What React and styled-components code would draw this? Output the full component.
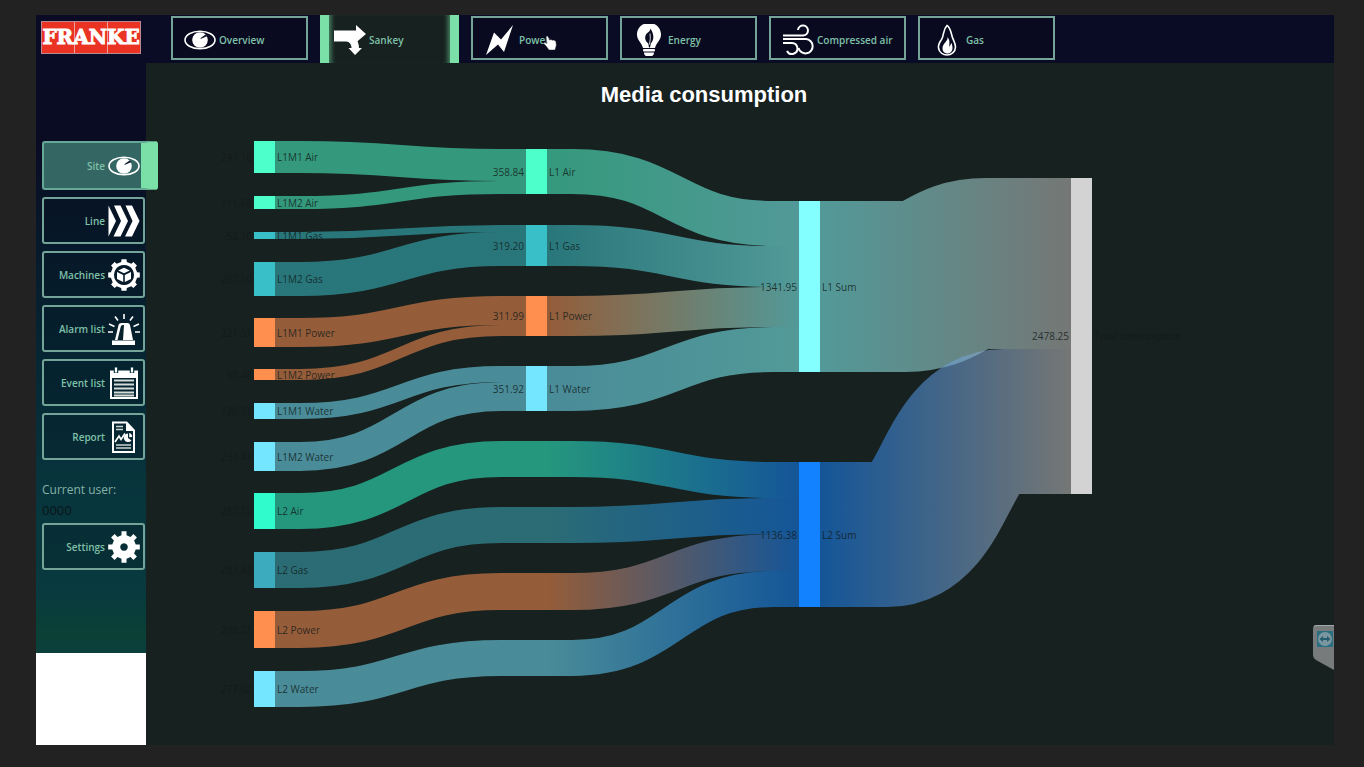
import React from "react";
import styled, { createGlobalStyle, css } from "styled-components";

const color = {
  frame: "#232222",
  canvas: "#17211f",
  navy: "#0a0b24",
  line: "#74a497",
  label: "#7fc0a8",
  accent: "#7be0a8",
};

const GlobalStyle = createGlobalStyle`
  * { box-sizing: border-box; }
  body {
    margin: 0;
    background: ${color.frame};
    font-family: "Open Sans", "Noto Sans", sans-serif;
  }
`;

const Page = styled.div`
  min-height: 100vh;
  padding: 15px 30px 22px 36px;
  display: flex;
`;

const Shell = styled.div`
  position: relative;
  flex: 1;
  min-width: 0;
  display: flex;
  flex-direction: column;
  background: ${color.canvas};
`;

const Header = styled.header`
  display: flex;
  align-items: center;
  height: 48px;
  padding-left: 5px;
  background: ${color.navy};
`;

const Logo = styled.a`
  width: 100px;
  height: 33px;
  margin-right: 30px;
  margin-bottom: 4px;
  border: 1px solid #b98a93;
  display: flex;
  align-items: center;
  justify-content: center;
  color: #fff;
  text-decoration: none;
  font: bold 20px/32px "DejaVu Serif", serif;
  -webkit-text-stroke: 1px #fff;
  background: linear-gradient(
    90deg,
    #ea3323 0 32px, #e9a3a0 32px 33px,
    #ea3323 33px 65px, #e9a3a0 65px 66px,
    #ea3323 66px
  );
`;

const Tabs = styled.nav`
  display: flex;
  align-items: center;
  gap: 12px;
  height: 48px;
`;

const Tab = styled.button`
  position: relative;
  display: flex;
  align-items: center;
  gap: 3px;
  width: 137px;
  height: 44px;
  margin: 0 0 3px;
  padding: 4px 0 0 11px;
  border: 2px solid ${color.line};
  background: #090a20;
  color: ${color.label};
  font: 600 10px/16px "Open Sans", "Noto Sans", sans-serif;
  text-align: left;
  white-space: nowrap;

  ${(p) =>
    p.$active &&
    css`
      width: 139px;
      height: 48px;
      margin: 0;
      padding: 2px 0 0 5px;
      border: solid ${color.accent};
      border-width: 0 9px;
      background: ${color.canvas};
      box-shadow: inset 6px 0 5px -4px #4d8a6b, inset -6px 0 5px -4px #4d8a6b;
    `}
`;

const Pointer = styled.svg`
  position: absolute;
  left: 70px;
  top: 17px;
  width: 14px;
  height: 16px;
`;

const Body = styled.div`
  flex: 1;
  display: flex;
`;

const Sidebar = styled.aside`
  width: 110px;
  flex: none;
  display: flex;
  flex-direction: column;
  background: linear-gradient(
    180deg,
    #0a0b24 0, #0a0c24 80px, #07192b 180px, #062b37 340px,
    #08353d 430px, #083a3e 530px, #0a4036 570px, #0a3f3c 590px
  );
`;

const SideNav = styled.nav`
  display: flex;
  flex-direction: column;
  gap: 7px;
  padding: 78px 1px 0 6px;
`;

const SideButton = styled.button`
  position: relative;
  display: flex;
  align-items: center;
  justify-content: flex-end;
  gap: 3px;
  width: 103px;
  height: 47px;
  padding: 0 3px 0 0;
  border: 2px solid ${color.line};
  border-radius: 3px;
  background: rgba(3, 20, 32, 0.25);
  color: ${color.label};
  font: 600 10px/16px "Open Sans", "Noto Sans", sans-serif;
  white-space: nowrap;

  ${(p) =>
    p.$active &&
    css`
      width: 116px;
      height: 49px;
      padding-right: 1px;
      border-color: #67a797;
      border-right: 17px solid ${color.accent};
      background: #346764;
    `}
`;

const UserPanel = styled.div`
  display: flex;
  flex-direction: column;
  gap: 7px;
  padding: 20px 1px 0 6px;
`;

const UserText = styled.div`
  font-size: ${(p) => (p.$dim ? "13px" : "12px")};
  line-height: 20px;
  color: ${(p) => (p.$dim ? "#0b1418" : "#84b3a5")};
  height: ${(p) => (p.$dim ? "16px" : "20px")};
`;

const Blank = styled.div`
  height: 92px;
  margin-top: auto;
  background: #fff;
`;

const Main = styled.main`
  flex: 1;
  min-width: 0;
`;

const Title = styled.h1`
  margin: 0;
  padding-right: 72px;
  color: #fff;
  font: bold 22px/64px "Liberation Sans", Arial, sans-serif;
  text-align: center;
`;

const Chart = styled.svg`
  display: block;
  width: 100%;
  height: auto;
  font-family: "Open Sans", "Noto Sans", sans-serif;
  font-size: 10px;
  text {
    fill: #101a1a;
    fill-opacity: 0.8;
    dominant-baseline: central;
  }
`;

const RemoteHandle = styled.button`
  position: absolute;
  right: 0;
  bottom: 75px;
  width: 21px;
  height: 45px;
  padding: 0;
  border: 0;
  background: none;
  svg { display: block; }
`;

const IconBox = styled.svg`
  width: 32px;
  height: 32px;
  flex: none;
  fill: #fff;
`;

const gear = (teeth, outer, root, c = 16) => {
  const points = [];
  const step = (Math.PI * 2) / teeth;
  for (let i = 0; i < teeth; i += 1) {
    const a = i * step - Math.PI / 2;
    [[-0.27, root], [-0.2, outer], [0.2, outer], [0.27, root]].forEach(([k, r]) => {
      points.push(`${(c + r * Math.cos(a + k * step)).toFixed(2)} ${(c + r * Math.sin(a + k * step)).toFixed(2)}`);
    });
  }
  return `M${points.join("L")}Z`;
};

const glyphs = {
  eye: (
    <>
      <ellipse cx="16" cy="16" rx="15" ry="8.8" fill="none" stroke="#fff" strokeWidth="1.6" />
      <circle cx="16" cy="16" r="7.800" />
      <path d="M16 15.200L20.500 9.500 23.500 12z" fill="#0d1a2b" />
      <path d="M17.500 13.200l1.800-4 2.400 1.300z" />
    </>
  ),
  sankey: (
    <path d="M0 6.500h22V1l10 9-10 8.500v-4.500c1.500 2.500 3 6 3 10h3l-7 7-6.500-7h3c0-3.500-2-6.500-5.500-6.500H0z" />
  ),
  bolt: <path d="M29 1 L20 28 L14 20.500 L2 31 L10 8.500 L17 15.500 Z" />,
  bulb: (
    <>
      <path d="M16 -1C8.500-1 4 4.500 4 10.500c0 5.500 4.500 8 6 13.500h12c1.500-5.500 6-8 6-13.500C28 4.500 23.500-1 16-1z" />
      <path d="M17.500 4.500c3 5 4.500 10.500.3 15l-.8 4h-1l-.7-4c-4-3-4-8-1-10.500 2-1.500 3-2.500 3.200-4.500z" fill="#090a20" />
      <path d="M17 9.500l.3 5-.8 6" stroke="#fff" strokeWidth=".8" fill="none" />
      <rect x="10" y="25" width="12" height="2.500" rx="1" />
      <path d="M11 28.500h10c0 3-2 4-5 4s-5-1-5-4z" />
    </>
  ),
  wind: (
    <g fill="none" stroke="#fff" strokeWidth="2">
      <path d="M1 11.500h20a5 5 0 1 0-5-5.500" />
      <path d="M1 15h23a7.200 7.200 0 1 1-7.500 9" />
      <path d="M1 19h9a5.500 5.500 0 1 1-5 8" />
    </g>
  ),
  flame: (
    <>
      <path d="M16 1.500c-4.500 4.500-2.500 9-5.500 14C8 19 7 21 7.500 24c.8 4.500 4.500 7 8.500 7s8.500-3 8.500-8c0-4-2.500-7-3.500-11S19 3 16 1.500z" fill="none" stroke="#fff" strokeWidth="1.600" />
      <path d="M16.500 13c1 4-5 6-5 11.500 0 2.500 1.500 4.500 4 5 4 .4 6-2.500 6-5.500 0-2-.7-3.500-.7-5-1.500 1-1.500 3-2.300 4-.5-3.500 1-6-2-10z" />
    </>
  ),
  chevrons: (
    <>
      <path d="M.5 .5v31l7.500-15.500z" />
      <path d="M6 .5h6.500l7.500 15.500-7.500 15.500H5.500L13 16z" />
      <path d="M17.500 .5H24l7.500 15.500L24 31.500h-7L24.500 16z" />
    </>
  ),
  machine: (
    <>
      <path fillRule="evenodd" d={`${gear(8, 16, 13.4)}M16 6a10 10 0 1 0 .01 0z`} />
      <path d="M16 8.800l5.800 2.700-5.800 2.800-5.800-2.800zM9 13l6.200 3v7L9 20zM23 13l-6.200 3v7l6.200-3z" />
    </>
  ),
  alarm: (
    <>
      <path d="M4 27.500h23V32H4z" />
      <path d="M7 27l3.500-15q.5-2 3-2h6q2 0 2.500 2L25 27z" />
      <path d="M9.500 27l3.300-13.500q.3-1.500 2-1.500h1.200L15 27z" fill="#06202c" />
      <path d="M16 1v5M7 3.500l3 4M25 3.500l-3 4M1 11l5.500 2.500M31 11l-5.500 2.500M0 19h5M32 19h-5" stroke="#fff" strokeWidth="1.600" />
    </>
  ),
  calendar: (
    <>
      <path fillRule="evenodd" d="M2 3.500h28V32H2zM4 11v19h24V11z" />
      <path d="M8 0v6M24 0v6" stroke="#06303a" strokeWidth="4.500" />
      <path d="M8 .5v5M24 .5v5" stroke="#fff" strokeWidth="2.200" />
      <path d="M6 13.500h20M6 17.500h20M6 21.500h20M6 25.500h20M6 28.500h20" stroke="#d5dcd8" strokeWidth="1.900" />
    </>
  ),
  report: (
    <>
      <path fillRule="evenodd" d="M4 .5h15L27 9v23H4zM6 2.500V30h19V10h-7V2.500z" />
      <path d="M8 5.500h7M8 8.500h7M8 24h15M8 27h15" stroke="#c9d4d0" strokeWidth="1.300" />
      <path d="M7 21l4-6 2 3.500 4-6" fill="none" stroke="#fff" strokeWidth="1.700" />
      <path d="M20 12.500v4.500l3.500 2.500a4.300 4.300 0 1 1-3.500-7z" />
      <path d="M21.200 12a4 4 0 0 1 3 4l-3 .3z" />
    </>
  ),
  settings: <path fillRule="evenodd" d={`${gear(8, 16, 12)}M16 12.200a3.800 3.800 0 1 0 .01 0z`} />,
};

const Icon = ({ name }) => (
  <IconBox viewBox="0 0 32 32" aria-hidden="true">
    {glyphs[name]}
  </IconBox>
);

const tabs = [
  { label: "Overview", icon: "eye" },
  { label: "Sankey", icon: "sankey", active: true },
  { label: "Power", icon: "bolt", hovered: true },
  { label: "Energy", icon: "bulb" },
  { label: "Compressed air", icon: "wind" },
  { label: "Gas", icon: "flame" },
];

const sideItems = [
  { label: "Site", icon: "eye", active: true },
  { label: "Line", icon: "chevrons" },
  { label: "Machines", icon: "machine" },
  { label: "Alarm list", icon: "alarm" },
  { label: "Event list", icon: "calendar" },
  { label: "Report", icon: "report" },
];

const NODE_WIDTH = 21;
const COLUMNS = [254, 526, 799, 1071];

const media = {
  air: "#4dffcb",
  air2: "#30fbcd",
  gas: "#38bfc8",
  gas2: "#3cabbd",
  power: "#ff8f4f",
  water: "#74e6ff",
  l1: "#84ffff",
  l2: "#1282ff",
  total: "#d3d3d3",
  totalBand: "#c4c0be",
};

const nodes = [
  { id: "a1", col: 0, y: 141, h: 32, kind: "air", name: "L1M1 Air", value: "247.16" },
  { id: "a2", col: 0, y: 196, h: 13, kind: "air", name: "L1M2 Air", value: "111.68" },
  { id: "g1", col: 0, y: 232, h: 7, kind: "gas", name: "L1M1 Gas", value: "52.10" },
  { id: "g2", col: 0, y: 262, h: 34, kind: "gas", name: "L1M2 Gas", value: "267.10" },
  { id: "p1", col: 0, y: 318, h: 29, kind: "power", name: "L1M1 Power", value: "221.51" },
  { id: "p2", col: 0, y: 369, h: 11, kind: "power", name: "L1M2 Power", value: "90.48" },
  { id: "w1", col: 0, y: 403, h: 16, kind: "water", name: "L1M1 Water", value: "120.51" },
  { id: "w2", col: 0, y: 442, h: 29, kind: "water", name: "L1M2 Water", value: "231.41" },
  { id: "a3", col: 0, y: 493, h: 36, kind: "air2", name: "L2 Air", value: "287.12" },
  { id: "g3", col: 0, y: 552, h: 36, kind: "gas2", name: "L2 Gas", value: "281.43" },
  { id: "p3", col: 0, y: 611, h: 37, kind: "power", name: "L2 Power", value: "290.21" },
  { id: "w3", col: 0, y: 671, h: 36, kind: "water", name: "L2 Water", value: "277.62" },
  { id: "la", col: 1, y: 149, h: 45, kind: "air", name: "L1 Air", value: "358.84" },
  { id: "lg", col: 1, y: 225, h: 41, kind: "gas", name: "L1 Gas", value: "319.20" },
  { id: "lp", col: 1, y: 296, h: 40, kind: "power", name: "L1 Power", value: "311.99" },
  { id: "lw", col: 1, y: 366, h: 45, kind: "water", name: "L1 Water", value: "351.92" },
  { id: "s1", col: 2, y: 201, h: 171, kind: "l1", name: "L1 Sum", value: "1341.95" },
  { id: "s2", col: 2, y: 462, h: 145, kind: "l2", name: "L2 Sum", value: "1136.38" },
  { id: "t", col: 3, y: 178, h: 316, kind: "total", name: "Total consumption", value: "2478.25" },
];

// `top` holds the upper edge of a band at its two ends; `via` is the edge as it passes the second column
const links = [
  { from: 0, to: 1, top: [141, 149], w: 32, c: ["air", "air"] },
  { from: 0, to: 1, top: [196, 181], w: 13, c: ["air", "air"] },
  { from: 0, to: 1, top: [232, 225], w: 7, c: ["gas", "gas"] },
  { from: 0, to: 1, top: [262, 232], w: 34, c: ["gas", "gas"] },
  { from: 0, to: 1, top: [318, 296], w: 29, c: ["power", "power"] },
  { from: 0, to: 1, top: [369, 325], w: 11, c: ["power", "power"] },
  { from: 0, to: 1, top: [403, 366], w: 16, c: ["water", "water"] },
  { from: 0, to: 1, top: [442, 382], w: 29, c: ["water", "water"] },
  { from: 1, to: 2, top: [149, 201], w: 45, c: ["air", "l1"] },
  { from: 1, to: 2, top: [225, 246], w: 41, c: ["gas", "l1"] },
  { from: 1, to: 2, top: [296, 287], w: 40, c: ["power", "l1"] },
  { from: 1, to: 2, top: [366, 327], w: 45, c: ["water", "l1"] },
  { from: 0, to: 2, via: 441, top: [493, 462], w: 36, c: ["air2", "l2"] },
  { from: 0, to: 2, via: 507, top: [552, 498], w: 36, c: ["gas2", "l2"] },
  { from: 0, to: 2, via: 573, top: [611, 534], w: 37, c: ["power", "l2"] },
  { from: 0, to: 2, via: 640, top: [671, 571], w: 36, c: ["water", "l2"] },
  { from: 2, to: 3, top: [201, 178], w: 171, lead: 85, c: ["l1", "totalBand"] },
  { from: 2, to: 3, top: [462, 349], w: 145, lead: 67, c: ["l2", "totalBand"] },
];

// A band leaves and enters its nodes straight for `lead` units and bends in between
const bend = (x0, y0, x1, y1, lead) => {
  const mid = (x0 + x1) / 2;
  return `H${x0 + lead}C${mid} ${y0} ${mid} ${y1} ${x1 - lead} ${y1}H${x1}`;
};

const linkPath = ({ from, to, via, top, w, lead = 25 }) => {
  const x0 = COLUMNS[from] + NODE_WIDTH;
  const x1 = COLUMNS[to];
  const y0 = top[0] + w / 2;
  const y1 = top[1] + w / 2;
  if (via === undefined) return `M${x0} ${y0}${bend(x0, y0, x1, y1, lead)}`;
  const left = COLUMNS[1];
  const right = left + NODE_WIDTH;
  const y = via + w / 2;
  return `M${x0} ${y0}${bend(x0, y0, left, y, lead)}H${right}${bend(right, y, x1, y1, lead)}`;
};

const Sankey = () => (
  <Chart viewBox="146 127 1188 618" role="img" aria-label="Media consumption by line and medium">
    <defs>
      {links.map((l, i) => (
        <linearGradient
          key={i}
          id={`link${i}`}
          gradientUnits="userSpaceOnUse"
          x1={COLUMNS[l.from] + NODE_WIDTH}
          x2={COLUMNS[l.to]}
          y1="0"
          y2="0"
        >
          <stop offset={l.via ? "0.52" : "0"} stopColor={media[l.c[0]]} />
          <stop offset="1" stopColor={media[l.c[1]]} />
        </linearGradient>
      ))}
    </defs>
    <g fill="none" strokeOpacity="0.54">
      {links.map((l, i) => (
        <path key={i} d={linkPath(l)} stroke={`url(#link${i})`} strokeWidth={l.w} />
      ))}
    </g>
    {nodes.map((n) => (
      <g key={n.id}>
        <rect x={COLUMNS[n.col]} y={n.y} width={NODE_WIDTH} height={n.h} fill={media[n.kind]} />
        <text x={COLUMNS[n.col] - 2} y={n.y + n.h / 2} textAnchor="end">{n.value}</text>
        <text x={COLUMNS[n.col] + NODE_WIDTH + 2} y={n.y + n.h / 2}>{n.name}</text>
      </g>
    ))}
  </Chart>
);

export default function App() {
  return (
    <Page>
      <GlobalStyle />
      <Shell>
        <Header>
          <Logo href="#">FRANKE</Logo>
          <Tabs>
            {tabs.map((t) => (
              <Tab key={t.label} type="button" $active={t.active}>
                <Icon name={t.icon} />
                {t.label}
                {t.hovered && (
                  <Pointer viewBox="0 0 14 16" aria-hidden="true">
                    <path d="M3 1.500q1.500-1 2.300.5L6.500 5l1.500-.5 1.500.7 1.500-.2 2 1.500.3 4L12 15H6L3 11 .7 8.500q.5-1.500 2.500-.5L4 8.500z" fill="#fff" stroke="#20242c" strokeWidth=".5" />
                  </Pointer>
                )}
              </Tab>
            ))}
          </Tabs>
        </Header>
        <Body>
          <Sidebar>
            <SideNav>
              {sideItems.map((s) => (
                <SideButton key={s.label} type="button" $active={s.active}>
                  {s.label}
                  <Icon name={s.icon} />
                </SideButton>
              ))}
            </SideNav>
            <UserPanel>
              <div>
                <UserText>Current user:</UserText>
                <UserText $dim>0000</UserText>
              </div>
              <SideButton type="button">
                Settings
                <Icon name="settings" />
              </SideButton>
            </UserPanel>
            <Blank />
          </Sidebar>
          <Main>
            <Title>Media consumption</Title>
            <Sankey />
          </Main>
        </Body>
        <RemoteHandle type="button" aria-label="Remote session">
          <svg width="21" height="45" viewBox="0 0 21 45">
            <path d="M3 0h18v45L3 35q-3-2-3-5V4q0-4 3-4z" fill="#777b7c" />
            <path d="M1 1.500Q2 .5 4 .5h17" fill="none" stroke="#a3a8a8" />
            <rect x="4" y="6" width="16" height="16" fill="#2a6e82" />
            <circle cx="12" cy="14" r="7" fill="#7a979f" />
            <path d="M6.500 14l3.500-3v2h4v-2l3.500 3-3.500 3v-2h-4v2z" fill="#245d70" />
          </svg>
        </RemoteHandle>
      </Shell>
    </Page>
  );
}
